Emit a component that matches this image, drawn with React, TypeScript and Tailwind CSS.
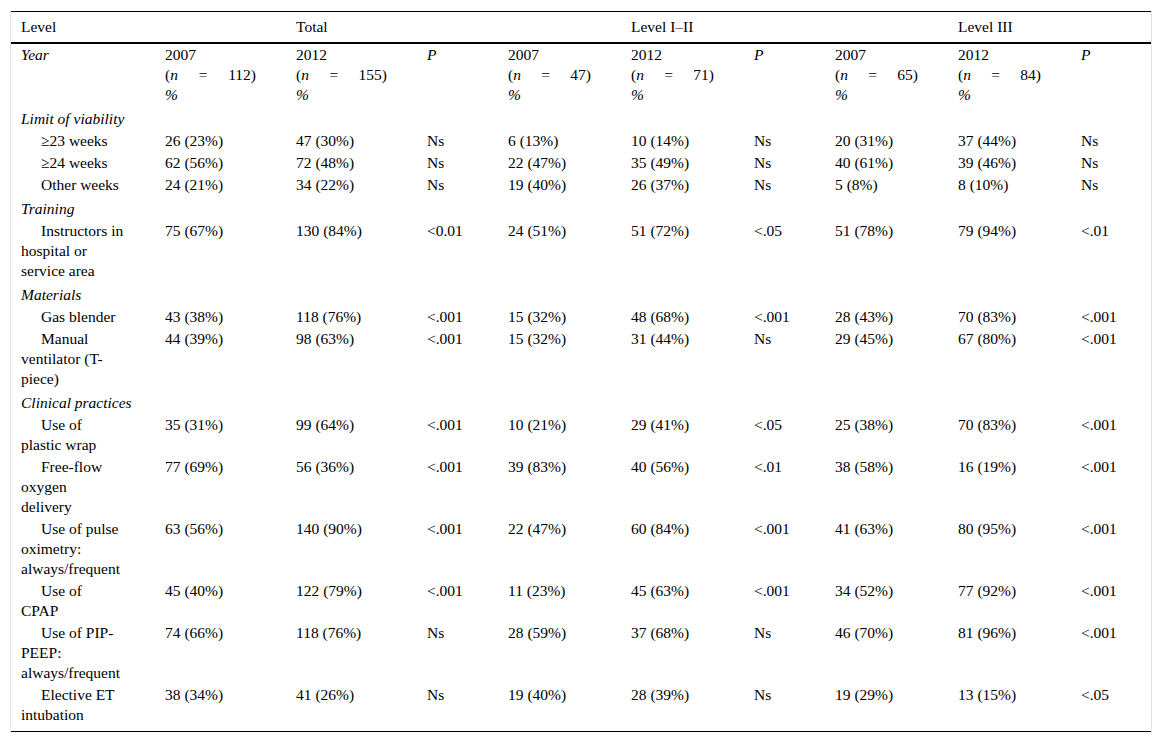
import React from "react";

type Row =
  | { kind: "cat"; label: string }
  | { kind: "data"; lines: string[]; values: string[] };

const rows: Row[] = [
  { kind: "cat", label: "Limit of viability" },
  { kind: "data", lines: ["≥23 weeks"], values: ["26 (23%)", "47 (30%)", "Ns", "6 (13%)", "10 (14%)", "Ns", "20 (31%)", "37 (44%)", "Ns"] },
  { kind: "data", lines: ["≥24 weeks"], values: ["62 (56%)", "72 (48%)", "Ns", "22 (47%)", "35 (49%)", "Ns", "40 (61%)", "39 (46%)", "Ns"] },
  { kind: "data", lines: ["Other weeks"], values: ["24 (21%)", "34 (22%)", "Ns", "19 (40%)", "26 (37%)", "Ns", "5 (8%)", "8 (10%)", "Ns"] },
  { kind: "cat", label: "Training" },
  { kind: "data", lines: ["Instructors in", "hospital or", "service area"], values: ["75 (67%)", "130 (84%)", "<0.01", "24 (51%)", "51 (72%)", "<.05", "51 (78%)", "79 (94%)", "<.01"] },
  { kind: "cat", label: "Materials" },
  { kind: "data", lines: ["Gas blender"], values: ["43 (38%)", "118 (76%)", "<.001", "15 (32%)", "48 (68%)", "<.001", "28 (43%)", "70 (83%)", "<.001"] },
  { kind: "data", lines: ["Manual", "ventilator (T-", "piece)"], values: ["44 (39%)", "98 (63%)", "<.001", "15 (32%)", "31 (44%)", "Ns", "29 (45%)", "67 (80%)", "<.001"] },
  { kind: "cat", label: "Clinical practices" },
  { kind: "data", lines: ["Use of", "plastic wrap"], values: ["35 (31%)", "99 (64%)", "<.001", "10 (21%)", "29 (41%)", "<.05", "25 (38%)", "70 (83%)", "<.001"] },
  { kind: "data", lines: ["Free-flow", "oxygen", "delivery"], values: ["77 (69%)", "56 (36%)", "<.001", "39 (83%)", "40 (56%)", "<.01", "38 (58%)", "16 (19%)", "<.001"] },
  { kind: "data", lines: ["Use of pulse", "oximetry:", "always/frequent"], values: ["63 (56%)", "140 (90%)", "<.001", "22 (47%)", "60 (84%)", "<.001", "41 (63%)", "80 (95%)", "<.001"] },
  { kind: "data", lines: ["Use of", "CPAP"], values: ["45 (40%)", "122 (79%)", "<.001", "11 (23%)", "45 (63%)", "<.001", "34 (52%)", "77 (92%)", "<.001"] },
  { kind: "data", lines: ["Use of PIP-", "PEEP:", "always/frequent"], values: ["74 (66%)", "118 (76%)", "Ns", "28 (59%)", "37 (68%)", "Ns", "46 (70%)", "81 (96%)", "<.001"] },
  { kind: "data", lines: ["Elective ET", "intubation"], values: ["38 (34%)", "41 (26%)", "Ns", "19 (40%)", "28 (39%)", "Ns", "19 (29%)", "13 (15%)", "<.05"] },
];

const widths = ["w-[144px]", "w-[131px]", "w-[131px]", "w-[81px]", "w-[123px]", "w-[123px]", "w-[81px]", "w-[123px]", "w-[123px]", "w-[80px]"];

// year + n for each group column, null = P column
const yearCols: ([string, string] | null)[] = [
  ["2007", "112"],
  ["2012", "155"],
  null,
  ["2007", "47"],
  ["2012", "71"],
  null,
  ["2007", "65"],
  ["2012", "84"],
  null,
];

const cell = "pl-[10px] pr-[30px] align-top text-left font-normal whitespace-nowrap";

const App = () => {
  return (
    <div className="w-[1163px] h-[743px] bg-white text-black text-[15.5px] leading-[20px] font-['Liberation_Serif',serif]">
      <div className="ml-[10px] pt-[11px] w-[1142px]">
        <div className="border-x border-[#e4e4e4]">
          <table className="table-fixed border-separate border-spacing-0 w-[1140px]">
            <colgroup>
              {widths.map((w, i) => (
                <col key={i} className={w} />
              ))}
            </colgroup>
            <thead>
              <tr>
                {["Level", "", "Total", "", "", "Level I–II", "", "", "Level III", ""].map((h, i) => (
                  <th
                    key={i}
                    className={`${cell} ${i === 0 ? "pr-[31px]" : ""} pt-[5px] pb-[5px] border-t border-b-2 border-black`}
                  >
                    {h}
                  </th>
                ))}
              </tr>
            </thead>
            <tbody>
              <tr>
                <td className={`${cell} pr-[31px] py-[1px] italic`}>Year</td>
                {yearCols.map((y, i) => (
                  <td key={i} className={`${cell} py-[1px]`}>
                    {y ? (
                      <div>
                        <div>{y[0]}</div>
                        <div className="flex justify-between">
                          <span>
                            (<i>n</i>
                          </span>
                          <span>=</span>
                          <span>{y[1]})</span>
                        </div>
                        <div className="italic">%</div>
                      </div>
                    ) : (
                      <i>P</i>
                    )}
                  </td>
                ))}
              </tr>
              {rows.map((r, idx) => {
                const last = idx === rows.length - 1;
                if (r.kind === "cat") {
                  return (
                    <tr key={idx}>
                      <td colSpan={10} className={`${cell} pt-[3px] pb-[1px] italic`}>
                        {r.label}
                      </td>
                    </tr>
                  );
                }
                const edge = last ? "pt-[1px] pb-[6px] border-b border-black" : "py-[1px]";
                return (
                  <tr key={idx}>
                    <td className={`${cell} pr-[31px] ${edge}`}>
                      {r.lines.map((l, j) => (
                        <div key={j} className={j === 0 ? "pl-5" : ""}>
                          {l}
                        </div>
                      ))}
                    </td>
                    {r.values.map((v, j) => (
                      <td key={j} className={`${cell} ${edge}`}>
                        {v}
                      </td>
                    ))}
                  </tr>
                );
              })}
            </tbody>
          </table>
        </div>
      </div>
    </div>
  );
};

export default App;
